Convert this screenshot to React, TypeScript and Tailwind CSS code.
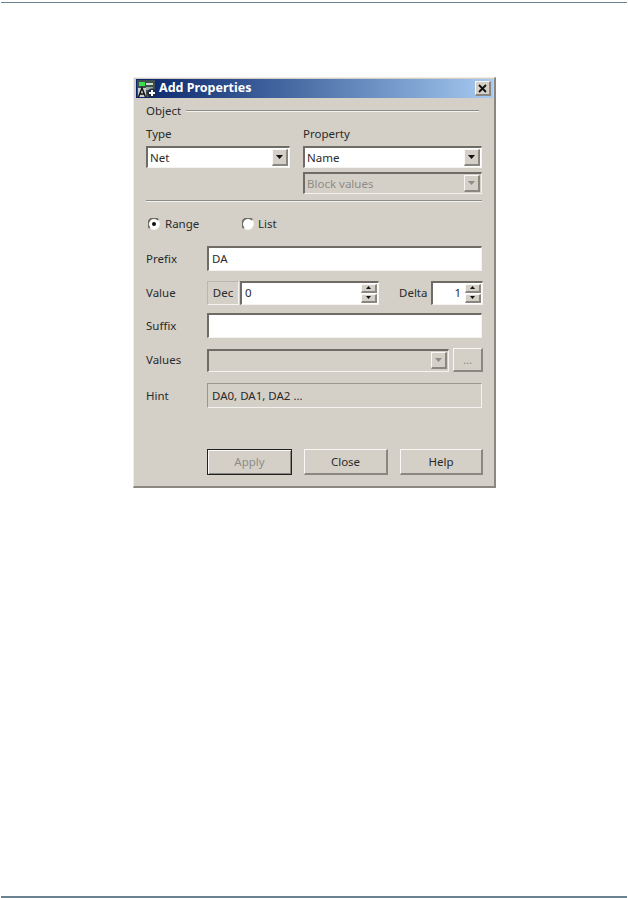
const sunken =
  "border-t-2 border-l-2 border-r border-b border-t-[#6f6c66] border-l-[#6f6c66] border-r-[#f4f3f0] border-b-[#f4f3f0]";
const raised =
  "border-t border-l border-r-2 border-b-2 border-t-[#f8f7f5] border-l-[#f8f7f5] border-r-[#8a8780] border-b-[#8a8780] bg-[#d4d0c8]";

function Arrow({ disabled }: { disabled?: boolean }) {
  return (
    <svg width="7" height="4" viewBox="0 0 7 4">
      <path d="M0 0 L7 0 L3.5 4 Z" fill={disabled ? "#8f8d88" : "#111"} />
    </svg>
  );
}

function Combo({ text, disabled, className }: { text: string; disabled?: boolean; className: string }) {
  return (
    <div className={`flex items-center pl-[2px] pr-[1px] ${sunken} ${disabled ? "bg-[#d4d0c8] text-[#8e8c87]" : "bg-white"} ${className}`}>
      <span className="flex-1">{text}</span>
      <div className={`flex h-[17px] w-[16px] items-center justify-center ${raised}`}>
        <Arrow disabled={disabled} />
      </div>
    </div>
  );
}

function Spinner() {
  return (
    <div className="flex h-[19px] w-[16px] flex-col gap-px">
      <div className={`flex h-[9px] items-center justify-center ${raised}`}>
        <svg width="5" height="3" viewBox="0 0 5 3"><path d="M2.5 0 L5 3 L0 3 Z" fill="#111" /></svg>
      </div>
      <div className={`flex h-[9px] items-center justify-center ${raised}`}>
        <svg width="5" height="3" viewBox="0 0 5 3"><path d="M0 0 L5 0 L2.5 3 Z" fill="#111" /></svg>
      </div>
    </div>
  );
}

function Radio({ checked }: { checked?: boolean }) {
  return (
    <svg width="12" height="12" viewBox="0 0 12 12">
      <circle cx="6" cy="6" r="5.5" fill="#fff" stroke="#f4f3f0" />
      <path d="M1.8 10.2 A5.6 5.6 0 0 1 10.2 1.8" fill="none" stroke="#6f6c66" strokeWidth="1.8" />
      {checked && <circle cx="6" cy="6" r="2" fill="#111" />}
    </svg>
  );
}

function Row({ label, children, className }: { label: string; children: React.ReactNode; className: string }) {
  return (
    <div className={`flex items-center ${className}`}>
      <span className="w-[61px]">{label}</span>
      {children}
    </div>
  );
}

function AppIcon() {
  return (
    <svg width="21" height="18" viewBox="0 0 21 18">
      <rect x="0" y="0" width="18" height="17" fill="#3f5052" />
      <rect x="2" y="2" width="6" height="4" fill="#38e04a" />
      <rect x="9" y="3" width="7" height="2" fill="#cfd6cc" />
      <rect x="9" y="7" width="7" height="3" fill="#9aa59c" />
      <rect x="1" y="8" width="8" height="9" fill="#c9d0cc" />
      <path d="M1.5 17 L5 8 L8.5 17 M3 14 H7" fill="none" stroke="#111" strokeWidth="1.4" />
      <circle cx="15" cy="13" r="4.5" fill="#1c2a44" />
      <path d="M15 10 V16 M12 13 H18" stroke="#fff" strokeWidth="2" />
    </svg>
  );
}

export default function App() {
  return (
    <div className="flex h-[898px] w-[628px] flex-col overflow-hidden bg-white font-['Noto_Sans','DejaVu_Sans',sans-serif] text-[11.5px] text-[#2a2a2a]">
      <div className="mx-px mt-[2px] h-px bg-[#6b8290]" />

      <div className="mt-[74px] ml-[133px] h-[411px] w-[363px] border-t border-l border-r-2 border-b-2 border-t-[#efeeea] border-l-[#efeeea] border-r-[#8a8780] border-b-[#8a8780] bg-[#d4d0c8] pt-[1px] pl-[2px] pr-[1px]">
        <div className="flex h-[19px] w-[357px] items-center bg-gradient-to-r from-[#0a246a] to-[#a6caf0] pr-[2px] pl-[1px]">
          <AppIcon />
          <span className="ml-[1px] flex-1 text-[12.5px] leading-none font-bold text-white">Add Properties</span>
          <div className={`flex h-[15px] w-[16px] items-center justify-center ${raised}`}>
            <svg width="9" height="9" viewBox="0 0 9 9">
              <path d="M1 1 L8 8 M8 1 L1 8" stroke="#111" strokeWidth="1.8" />
            </svg>
          </div>
        </div>

        <div className="flex flex-col pl-[10px]">
          <div className="mt-[5px] flex h-[16px] items-center">
            <span>Object</span>
            <div className="ml-[5px] h-[2px] w-[293px] border-t border-b border-t-[#8e8c87] border-b-[#f4f3f0]" />
          </div>

          <div className="mt-[7px] flex">
            <div className="flex w-[157px] flex-col">
              <span className="h-[16px] leading-[16px]">Type</span>
              <Combo text="Net" className="mt-[4px] h-[22px] w-[144px]" />
            </div>
            <div className="flex flex-col">
              <span className="h-[16px] leading-[16px]">Property</span>
              <Combo text="Name" className="mt-[4px] h-[22px] w-[179px]" />
              <Combo text="Block values" disabled className="mt-[4px] h-[22px] w-[179px]" />
            </div>
          </div>

          <div className="mt-[6px] h-[2px] w-[336px] border-t border-b border-t-[#8e8c87] border-b-[#f4f3f0]" />

          <div className="mt-[14px] flex h-[16px] items-center pl-[2px]">
            <Radio checked />
            <span className="ml-[5px] w-[77px]">Range</span>
            <Radio />
            <span className="ml-[4px]">List</span>
          </div>

          <Row label="Prefix" className="mt-[14px] h-[25px]">
            <div className={`flex h-[25px] w-[275px] items-center bg-white pl-[3px] ${sunken}`}>DA</div>
          </Row>

          <Row label="Value" className="mt-[9px] h-[25px]">
            <div className="flex h-[24px] w-[32px] items-center justify-center border border-[#f4f3f0] border-t-[#b9b6af] border-l-[#b9b6af]">Dec</div>
            <div className={`ml-[1px] flex h-[24px] w-[139px] items-center bg-white pl-[3px] pr-[1px] ${sunken}`}>
              <span className="flex-1">0</span>
              <Spinner />
            </div>
            <span className="ml-[20px] w-[32px]">Delta</span>
            <div className={`flex h-[24px] w-[52px] items-center bg-white pr-[1px] ${sunken}`}>
              <span className="flex-1 pr-[4px] text-right">1</span>
              <Spinner />
            </div>
          </Row>

          <Row label="Suffix" className="mt-[8px] h-[25px]">
            <div className={`h-[25px] w-[275px] bg-white ${sunken}`} />
          </Row>

          <Row label="Values" className="mt-[10px] h-[24px]">
            <Combo text="" disabled className="h-[23px] w-[242px]" />
            <div className={`ml-[4px] flex h-[24px] w-[30px] items-center justify-center text-[#8e8c87] ${raised}`}>...</div>
          </Row>

          <Row label="Hint" className="mt-[11px] h-[25px]">
            <div className="flex h-[25px] w-[275px] items-center border border-t-[#9a9791] border-l-[#9a9791] border-r-[#f4f3f0] border-b-[#f4f3f0] pl-[4px]">
              DA0, DA1, DA2 ...
            </div>
          </Row>

          <div className="mt-[41px] flex pl-[61px]">
            <div className="flex h-[26px] w-[85px] items-center justify-center border-[1.5px] border-[#222] text-[#8e8c87] shadow-[inset_1px_1px_0_#f8f7f5,inset_-1px_-1px_0_#8a8780]">Apply</div>
            <div className={`ml-[12px] flex h-[26px] w-[84px] items-center justify-center ${raised}`}>Close</div>
            <div className={`ml-[12px] flex h-[26px] w-[83px] items-center justify-center ${raised}`}>Help</div>
          </div>
        </div>
      </div>

      <div className="mx-px mt-[408px] h-[2px] bg-[#6b8290]" />
    </div>
  );
}
